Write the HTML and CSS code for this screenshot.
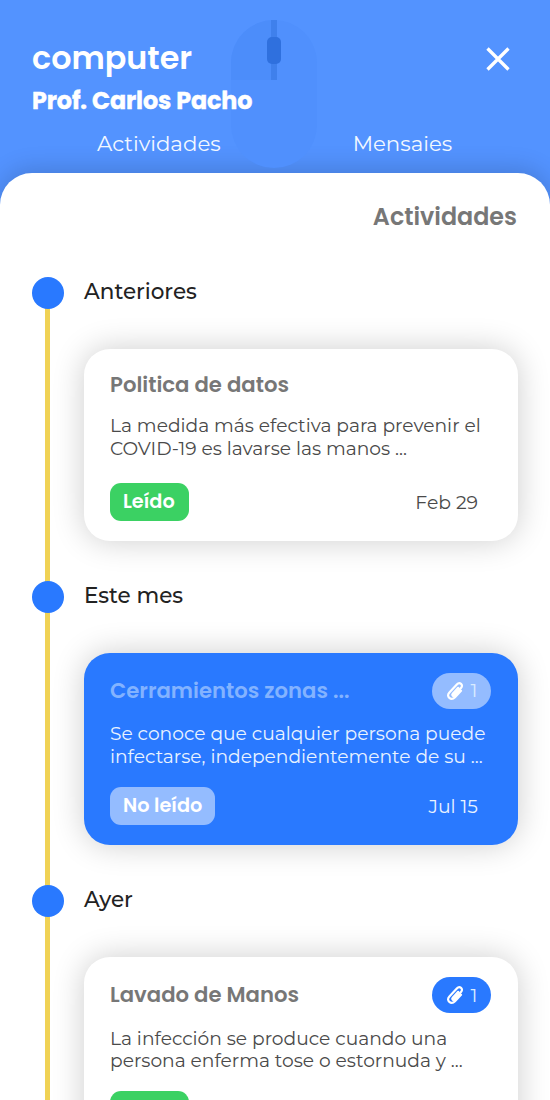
FILE: index.html
```
<!DOCTYPE html>
<html lang="es">
<head>
  <meta charset="UTF-8" />
  <meta name="viewport" content="width=device-width, initial-scale=1.0"/>
  <title>Actividades</title>
  <link rel="stylesheet" href="styles.css">
</head>
<body>
  <div class="app">
    <header class="header">
      <svg class="mouse" viewBox="0 0 88 152" aria-hidden="true">
        <path class="mouse-body" d="M1 44a43 43 0 0 1 86 0v62a43 43 0 0 1-86 0z"/>
        <path class="mouse-button" d="M1 61V44A43 43 0 0 1 44 1v60z"/>
        <path class="mouse-line" d="M41 1h6v60h-6z"/>
        <rect class="mouse-wheel" x="37" y="18" width="14" height="27" rx="5"/>
      </svg>
      <div class="title-row">
        <h1>computer</h1>
        <button class="close" type="button" aria-label="Cerrar">
          <svg viewBox="0 0 24 24"><path d="M1.5 1.5l21 21M22.5 1.5l-21 21"/></svg>
        </button>
      </div>
      <p class="teacher">Prof. Carlos Pacho</p>
      <nav class="tabs">
        <a class="tab">Actividades</a>
        <a class="tab">Mensaies</a>
      </nav>
    </header>

    <main class="sheet">
      <h2>Actividades</h2>

      <div class="timeline">
        <section class="group">
          <h3>Anteriores</h3>
          <article class="card">
            <div class="card-head">
              <h4>Politica de datos</h4>
            </div>
            <p class="text">La medida más efectiva para prevenir el<br>COVID-19 es lavarse las manos ...</p>
            <div class="card-foot">
              <span class="status read">Leído</span>
              <time class="date">Feb 29</time>
            </div>
          </article>
        </section>

        <section class="group">
          <h3>Este mes</h3>
          <article class="card unread">
            <div class="card-head">
              <h4>Cerramientos zonas ...</h4>
              <span class="files">
                <svg viewBox="0 0 18 20"><path d="M12.2 6.8L6.8 12.8c-1.2 1.4.4 2.8 1.6 1.5l6.6-7.2c2.9-3.2-1.3-6.8-4.2-3.6L3.4 11.4c-3.9 4.3 1.8 8.8 5.6 4.8l6-6.4"/></svg>
                <span>1</span>
              </span>
            </div>
            <p class="text">Se conoce que cualquier persona puede<br>infectarse, independientemente de su ...</p>
            <div class="card-foot">
              <span class="status pending">No leído</span>
              <time class="date">Jul 15</time>
            </div>
          </article>
        </section>

        <section class="group">
          <h3>Ayer</h3>
          <article class="card">
            <div class="card-head">
              <h4>Lavado de Manos</h4>
              <span class="files">
                <svg viewBox="0 0 18 20"><path d="M12.2 6.8L6.8 12.8c-1.2 1.4.4 2.8 1.6 1.5l6.6-7.2c2.9-3.2-1.3-6.8-4.2-3.6L3.4 11.4c-3.9 4.3 1.8 8.8 5.6 4.8l6-6.4"/></svg>
                <span>1</span>
              </span>
            </div>
            <p class="text">La infección se produce cuando una<br>persona enferma tose o estornuda y ...</p>
            <div class="card-foot">
              <span class="status read">Leído</span>
            </div>
          </article>
        </section>
      </div>
    </main>
  </div>
</body>
</html>
```
FILE: styles.css
```
* {
  margin: 0;
  padding: 0;
  box-sizing: border-box;
}

body {
  font-family: Montserrat, Inter, sans-serif;
  background-color: #5393ff;
  color: #222;
}

.app {
  height: 1100px;
  overflow: hidden;
}

.header {
  position: relative;
  height: 172.5px;
  padding: 38px 40px 0 32px;
}

.mouse {
  position: absolute;
  left: 230px;
  top: 19px;
  width: 88px;
  height: 152px;
}

.mouse-body {
  fill: #5090fd;
}

.mouse-button {
  fill: #4c8dfa;
}

.mouse-line {
  fill: #3f80ec;
}

.mouse-wheel {
  fill: #2f70de;
}

.title-row {
  position: relative;
  display: flex;
  justify-content: space-between;
  align-items: center;
  height: 41px;
}

h1,
.teacher,
h2,
h4,
.status {
  font-family: Poppins, Inter, sans-serif;
}

h1 {
  color: #fff;
  font-size: 31.8px;
  font-weight: 600;
  line-height: 41px;
}

.close {
  width: 24px;
  height: 24px;
  border: none;
  background: none;
}

.close svg {
  display: block;
  width: 24px;
  height: 24px;
  fill: none;
  stroke: #fff;
  stroke-width: 3.3;
}

.teacher {
  position: relative;
  margin-top: 7px;
  color: #fff;
  font-size: 23.8px;
  font-weight: 700;
  letter-spacing: -0.1px;
  line-height: 30px;
  white-space: nowrap;
  -webkit-text-stroke: 0.4px #fff;
}

.tabs {
  position: relative;
  display: flex;
  margin: 13px 0 0 65px;
  gap: 132px;
}

.tab {
  color: #f2f8ff;
  font-size: 21.3px;
  line-height: 28px;
}

.sheet {
  min-height: 927.5px;
  padding: 29px 32px 0 31px;
  border-radius: 32px 32px 0 0;
  background-color: #fff;
  box-shadow: 0 -4px 24px rgba(0, 0, 0, 0.16);
}

h2 {
  padding-right: 1px;
  color: #777;
  font-size: 23.8px;
  font-weight: 600;
  line-height: 30px;
  text-align: right;
}

.timeline {
  position: relative;
  margin-top: 44px;
}

.timeline::before {
  content: "";
  position: absolute;
  left: 14px;
  top: 16px;
  width: 5px;
  height: 900px;
  background-color: #f0d255;
}

.group {
  position: relative;
  height: 304.3px;
  padding-left: 53px;
}

.group::before {
  content: "";
  position: absolute;
  left: 0.5px;
  top: 1px;
  width: 32px;
  height: 32px;
  border-radius: 50%;
  background-color: #2979ff;
}

h3 {
  font-size: 21.5px;
  font-weight: 500;
  line-height: 31px;
}

.card {
  display: flex;
  flex-direction: column;
  height: 192px;
  margin-top: 42px;
  padding: 20px 27px 19.5px 26px;
  border-radius: 26px;
  background-color: #fff;
  box-shadow: 0 0 32px rgba(0, 0, 0, 0.2);
}

.card-head {
  display: flex;
  justify-content: space-between;
  align-items: center;
  min-height: 32px;
}

h4 {
  color: #777;
  font-size: 21.2px;
  font-weight: 600;
  line-height: 32px;
  white-space: nowrap;
}

.files {
  display: flex;
  justify-content: center;
  align-items: center;
  gap: 7px;
  width: 59px;
  height: 36px;
  border-radius: 18px;
  background-color: #2979ff;
  color: #d9ebff;
  font-size: 19px;
}

.files svg {
  width: 18px;
  height: 20px;
  fill: none;
  stroke: #fff;
  stroke-width: 2.2;
  stroke-linecap: round;
}

.text {
  margin-top: 14.5px;
  color: #4a4a4a;
  font-size: 18.65px;
  line-height: 22.8px;
  white-space: nowrap;
}

.card-foot {
  display: flex;
  justify-content: space-between;
  align-items: center;
  margin-top: auto;
  padding-right: 13px;
}

.status {
  min-width: 79px;
  padding: 9px 13px;
  border-radius: 11px;
  color: #fff;
  font-size: 19.3px;
  font-weight: 600;
  line-height: 20.5px;
}

.read {
  background-color: #3bd163;
}

.pending {
  background-color: #94bcff;
}

.date {
  color: #4a4a4a;
  font-size: 18.8px;
  line-height: 22px;
  padding-top: 2px;
}

.unread {
  background-color: #2979ff;
}

.unread h4 {
  color: #83b3ff;
}

.unread .files {
  background-color: #94bcff;
}

.unread .text,
.unread .date {
  color: #e9f3ff;
}
```
